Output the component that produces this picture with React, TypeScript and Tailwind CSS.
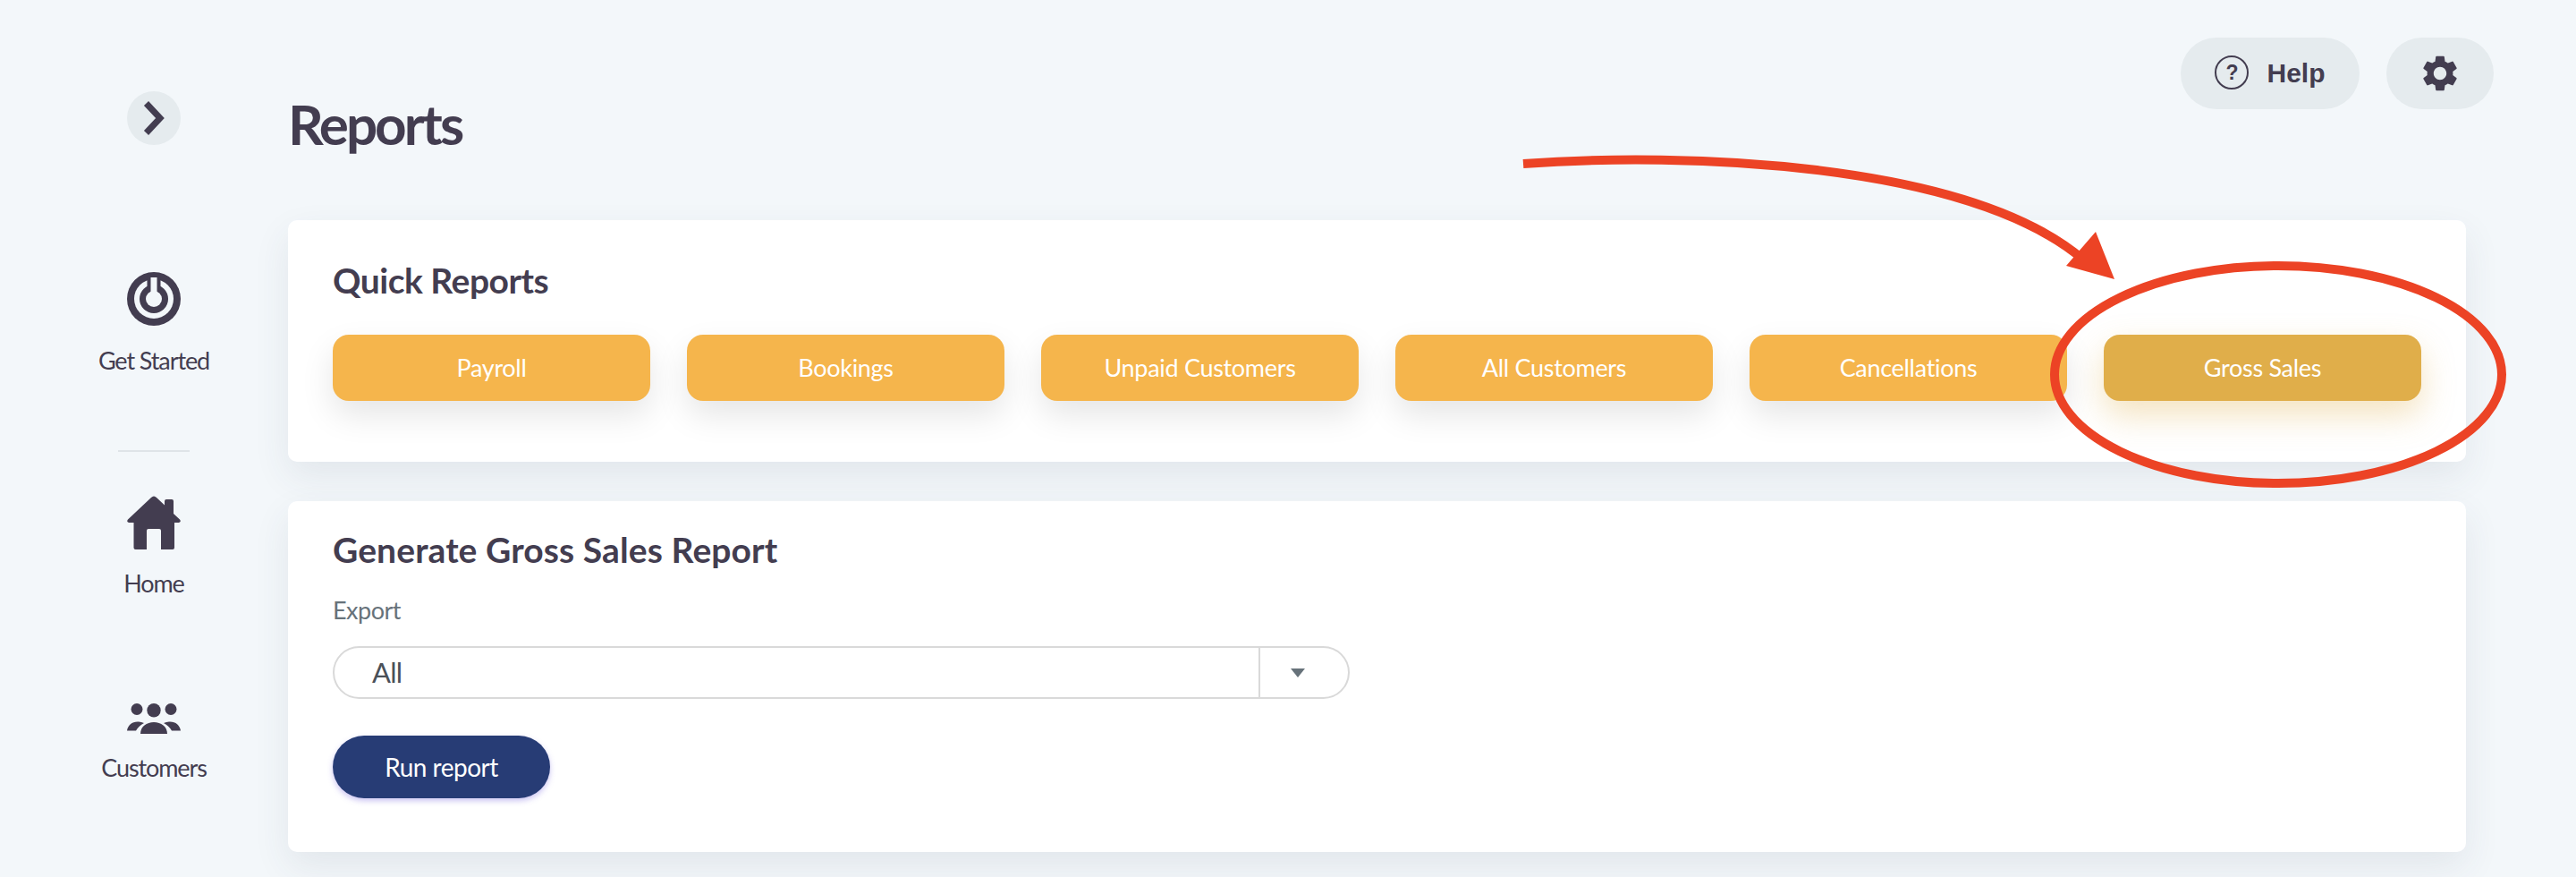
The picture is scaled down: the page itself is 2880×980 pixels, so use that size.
import React from 'react';
import { MdSettings } from 'react-icons/md';

const quickReports = ['Payroll', 'Bookings', 'Unpaid Customers', 'All Customers', 'Cancellations', 'Gross Sales'];

const PowerIcon = () => (
  <svg width="60" height="60" viewBox="0 0 60 60" className="fill-[#433d50]">
    <circle cx="30" cy="30" r="30" />
    <circle cx="30" cy="30" r="22" className="fill-[#f3f7fa]" />
    <circle cx="30" cy="30" r="16" />
    <rect x="22.5" y="3" width="15" height="24" />
    <circle cx="30" cy="30" r="9" className="fill-[#f3f7fa]" />
    <rect x="26.5" y="6" width="7" height="22" className="fill-[#f3f7fa]" />
  </svg>
);

const HomeIcon = () => (
  <svg width="60" height="60" viewBox="0 0 60 60" className="fill-[#433d50]">
    <path d="M30 0.5 Q31.5 0.5 33 2 L42 10.5 V6 Q42 4 44 4 H50 Q52 4 52 6 V20 L59 26.5 Q61 29 58 30 H53 V58 Q53 60 51 60 H38 V39 Q38 37 36 37 H24 Q22 37 22 39 V60 H9.5 Q7.5 60 7.5 58 V30 H2 Q-1 29 1 26.5 L27 2 Q28.5 0.5 30 0.5 Z" />
  </svg>
);

const CustomersIcon = () => (
  <svg width="60" height="34" viewBox="0 0 60 34" className="fill-[#433d50]">
    <circle cx="30" cy="7.7" r="7.7" />
    <circle cx="11" cy="6.5" r="6.5" />
    <circle cx="49" cy="6.5" r="6.5" />
    <path d="M15 34 C15 26 22 21 30 21 C38 21 45 26 45 34 Z" />
    <path d="M0 30.5 C1 24 6 20 13 20.5 C15 20.5 17 21 19 22 C15 24 12 27 10 30.5 Z" />
    <path d="M60 30.5 C59 24 54 20 47 20.5 C45 20.5 43 21 41 22 C45 24 48 27 50 30.5 Z" />
  </svg>
);

const NavItem: React.FC<{ icon: React.ReactNode; label: string; className?: string }> = ({ icon, label, className }) => (
  <div className={`flex flex-col items-center ${className ?? ''}`}>
    {icon}
    <span className="text-[27px] leading-[34px] tracking-[-1.1px] text-[#433d50]">{label}</span>
  </div>
);

export default function App() {
  return (
    <div className="flex h-[980px] overflow-hidden bg-[#f3f7fa] font-['Lato',sans-serif]">
      {/* Sidebar */}
      <aside className="flex w-[322px] shrink-0 flex-col items-center pt-[102px] pl-[22px]">
        <button className="flex h-[60px] w-[60px] items-center justify-center rounded-full bg-[#e5ebee]">
          <svg width="24" height="38" viewBox="0 0 24 38" fill="none" stroke="#433d50" strokeWidth="7">
            <path d="M3.5 2.5 L19 19 L3.5 35.5" />
          </svg>
        </button>
        <NavItem className="mt-[142px] gap-[22px]" icon={<PowerIcon />} label="Get Started" />
        <div className="mt-[83px] h-[2px] w-[80px] bg-[#dfe4e8]" />
        <NavItem className="mt-[49px] gap-[21px]" icon={<HomeIcon />} label="Home" />
        <NavItem className="mt-[117px] gap-[21px]" icon={<CustomersIcon />} label="Customers" />
      </aside>

      {/* Main */}
      <main className="flex min-w-0 flex-1 flex-col pr-[92px]">
        <header className="flex h-[246px] items-start justify-between pt-[42px]">
          <h1 className="mt-[60px] text-[62px] leading-[72px] font-bold tracking-[-3px] text-[#433d50]">Reports</h1>
          <div className="flex gap-[30px]">
            <button className="flex h-[80px] w-[200px] items-center justify-center gap-[20px] rounded-full bg-[#e5ebee] pb-[2px] font-['Liberation_Sans',sans-serif] text-[#433d50]">
              <span className="flex h-[38px] w-[38px] items-center justify-center rounded-full border-2 border-[#433d50] text-[23px] leading-none font-bold">?</span>
              <span className="text-[30px] font-bold">Help</span>
            </button>
            <button className="flex h-[80px] w-[120px] items-center justify-center rounded-full bg-[#e5ebee] text-[#433d50]">
              <MdSettings size={48} />
            </button>
          </div>
        </header>

        <section className="mr-[31px] h-[270px] rounded-[10px] bg-white px-[50px] pt-[44px] shadow-[0_16px_40px_rgba(60,70,90,0.09)]">
          <h2 className="text-[39px] leading-[46px] font-bold tracking-[-0.5px] text-[#433d50]">Quick Reports</h2>
          <div className="mt-[38px] grid grid-cols-6 gap-[41px]">
            {quickReports.map((name) => (
              <button
                key={name}
                className={
                  name === 'Gross Sales'
                    ? 'h-[74px] rounded-[18px] bg-[#e0ae4a] text-[27px] tracking-[-0.3px] text-white shadow-[0_16px_36px_rgba(224,174,74,0.35)]'
                    : 'h-[74px] rounded-[18px] bg-[#f5b54c] text-[27px] tracking-[-0.3px] text-white shadow-[0_16px_36px_rgba(0,0,0,0.1)]'
                }
              >
                {name}
              </button>
            ))}
          </div>
        </section>

        <section className="mt-[44px] mr-[31px] h-[392px] rounded-[10px] bg-white px-[50px] pt-[31px] shadow-[0_16px_40px_rgba(60,70,90,0.09)]">
          <h2 className="text-[39px] leading-[46px] font-bold tracking-[0.1px] text-[#433d50]">Generate Gross Sales Report</h2>
          <div className="mt-[27px] text-[27px] leading-[36px] tracking-[-0.5px] text-[#67727a]">Export</div>
          <div className="mt-[22px] flex h-[59px] w-[1137px] items-center rounded-full border-2 border-[#d9d9d9]">
            <span className="flex-1 pl-[42px] text-[31px] tracking-[-0.8px] text-[#4a5058]">All</span>
            <span className="flex h-full w-[100px] items-center justify-center border-l-2 border-[#d9d9d9] pr-[14px]">
              <svg width="16" height="10" viewBox="0 0 16 10" className="fill-[#67727a]">
                <path d="M0 0 H16 L8 10 Z" />
              </svg>
            </span>
          </div>
          <button className="mt-[41px] h-[70px] w-[243px] rounded-full bg-[#273c75] text-[28px] tracking-[-0.5px] text-white shadow-[0_3px_6px_rgba(110,90,220,0.35)]">
            Run report
          </button>
        </section>
      </main>

      {/* Hand-drawn annotation over the page */}
      <svg className="pointer-events-none absolute top-0 left-0" width="2880" height="980" viewBox="0 0 2880 980" fill="none">
        <path d="M1703 183 C1880 170 2200 180 2329 290" stroke="#ec4325" strokeWidth="10" />
        <path d="M2364 312 L2343 259 L2310 297 Z" fill="#ec4325" />
        <ellipse cx="2547" cy="418.5" rx="250" ry="121.5" stroke="#ec4325" strokeWidth="10" />
      </svg>
    </div>
  );
}
